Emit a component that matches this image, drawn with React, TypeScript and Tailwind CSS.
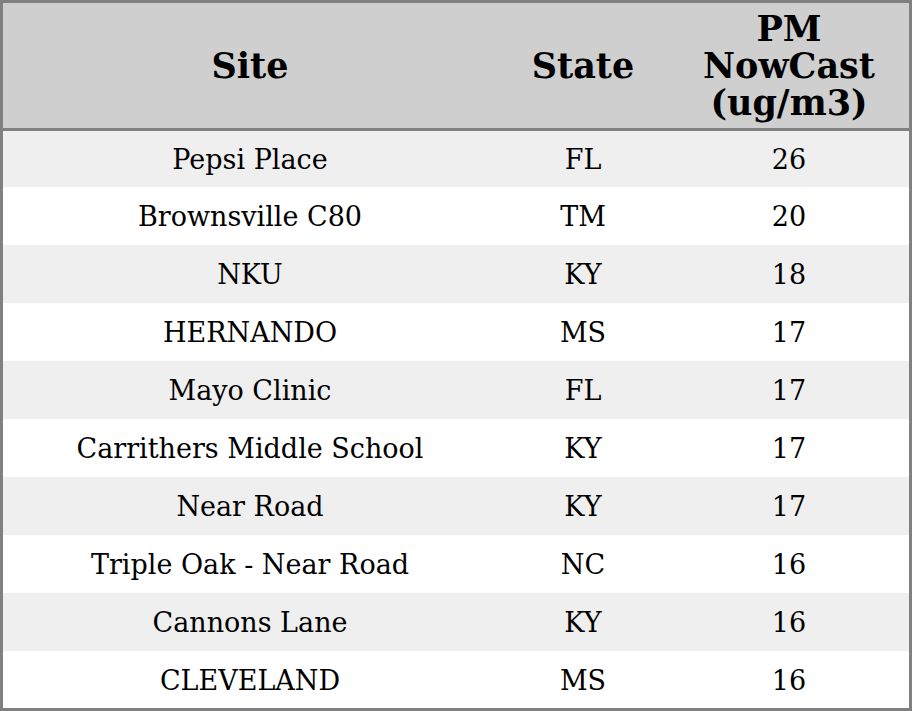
import React from "react";

const rows: [string, string, string][] = [
  ["Pepsi Place", "FL", "26"],
  ["Brownsville C80", "TM", "20"],
  ["NKU", "KY", "18"],
  ["HERNANDO", "MS", "17"],
  ["Mayo Clinic", "FL", "17"],
  ["Carrithers Middle School", "KY", "17"],
  ["Near Road", "KY", "17"],
  ["Triple Oak - Near Road", "NC", "16"],
  ["Cannons Lane", "KY", "16"],
  ["CLEVELAND", "MS", "16"],
];

const heights = ["h-[56px]", "h-[58px]", "h-[58px]", "h-[58px]", "h-[58px]", "h-[58px]", "h-[58px]", "h-[58px]", "h-[58px]", "h-[57px]"];

export default function App() {
  return (
    <div
      className="w-[912px] h-[711px] bg-white border-[3px] border-[#808080] flex flex-col text-black"
      style={{ fontFamily: '"DejaVu Serif", serif' }}
    >
      <div className="grid grid-cols-[494px_172px_240px] h-[125px] bg-[#cfcfcf] border-b-[3px] border-[#808080] box-content font-bold text-[35px] leading-[37px]">
        <div className="flex items-center justify-center text-center">Site</div>
        <div className="flex items-center justify-center text-center">State</div>
        <div className="flex items-center justify-center text-center">
          <div>
            PM
            <br />
            NowCast
            <br />
            (ug/m3)
          </div>
        </div>
      </div>
      {rows.map((r, i) => (
        <div
          key={i}
          className={`grid grid-cols-[494px_172px_240px] ${heights[i]} pt-[3px] text-[27px] ${i % 2 === 0 ? "bg-[#efefef]" : "bg-white"}`}
        >
          <div className="flex items-center justify-center">{r[0]}</div>
          <div className="flex items-center justify-center">{r[1]}</div>
          <div className="flex items-center justify-center">{r[2]}</div>
        </div>
      ))}
    </div>
  );
}
